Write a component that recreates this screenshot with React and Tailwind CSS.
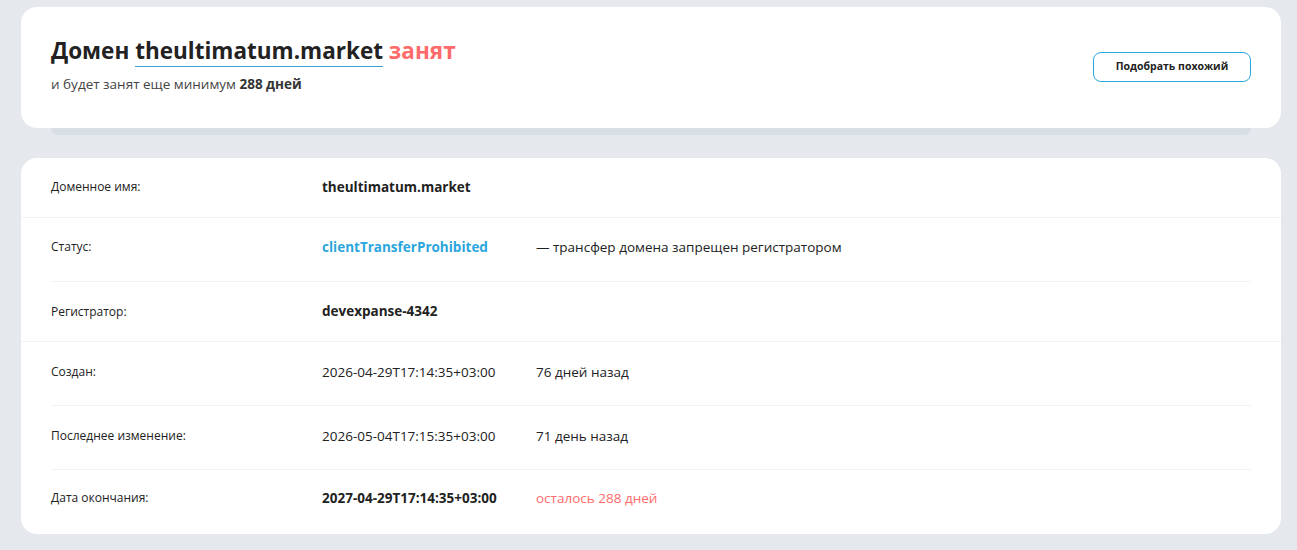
const rows = [
  [
    { label: 'Доменное имя:', value: 'theultimatum.market', bold: true, h: 'h-[59px] pb-px' },
  ],
  [
    {
      label: 'Статус:',
      value: 'clientTransferProhibited',
      bold: true,
      blue: true,
      note: '— трансфер домена запрещен регистратором',
      h: 'h-[64px] pb-[5px]',
    },
    { label: 'Регистратор:', value: 'devexpanse-4342', bold: true, h: 'h-[59px] pb-0' },
  ],
  [
    { label: 'Создан:', value: '2026-04-29T17:14:35+03:00', note: '76 дней назад', h: 'h-[64px] pb-[3px]' },
    { label: 'Последнее изменение:', value: '2026-05-04T17:15:35+03:00', note: '71 день назад', h: 'h-[64px] pb-[3px]' },
    { label: 'Дата окончания:', value: '2027-04-29T17:14:35+03:00', bold: true, note: 'осталось 288 дней', red: true, h: 'h-[64px] pb-[8px]' },
  ],
]

function Row({ row, last }) {
  return (
    <div className={`mx-[30px] flex items-center ${row.h} ${last ? '' : 'border-b border-[#f0f2f4]'}`}>
      <div className="w-[271px] text-[12px] text-[#222]">{row.label}</div>
      <div
        className={`w-[214px] text-[13.5px] ${row.bold ? 'font-bold' : ''} ${row.blue ? 'text-[#2ba6dd]' : 'text-[#222]'}`}
      >
        {row.value}
      </div>
      {row.note && (
        <div className={`text-[13.5px] ${row.red ? 'text-[#ff6b6b]' : 'text-[#222]'}`}>{row.note}</div>
      )}
    </div>
  )
}

export default function App() {
  return (
    <div className="min-h-[550px] bg-[#e5e9ed] pl-[21px] pr-[16px] pt-[7px] pb-4 font-['Open_Sans',sans-serif]">
      <div>
        <div className="flex h-[121px] items-start justify-between rounded-2xl bg-white px-[30px] pt-[28px]">
          <div>
            <h1 className="text-[22.5px] font-bold leading-[32px] text-[#222]">
              Домен{' '}
              <span className="border-b border-[#3d9dcb]">theultimatum.market</span>{' '}
              <span className="text-[#ff6b6b]">занят</span>
            </h1>
            <p className="mt-[7px] text-[13.5px] text-[#444]">
              и будет занят еще минимум <span className="font-bold text-[#333]">288 дней</span>
            </p>
          </div>
          <button className="mt-[17px] h-[30px] w-[158px] rounded-lg border border-[#2aa8dc] bg-white text-[10.5px] font-bold text-[#222]">
            Подобрать похожий
          </button>
        </div>
        <div className="mx-[30px] h-[7px] rounded-b-lg bg-[#d8dfe5]" />
      </div>

      <div className="mt-[23px] rounded-2xl bg-white">
        {rows.map((group, gi) => (
          <div key={gi} className={gi < rows.length - 1 ? 'border-b border-[#f0f2f4]' : ''}>
            {group.map((row, ri) => (
              <Row key={ri} row={row} last={ri === group.length - 1} />
            ))}
          </div>
        ))}
      </div>
    </div>
  )
}
